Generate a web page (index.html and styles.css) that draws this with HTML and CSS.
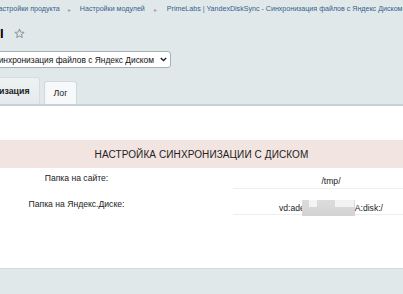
FILE: index.html
```html
<!DOCTYPE html>
<html lang="ru">
<head>
<meta charset="utf-8">
<link rel="stylesheet" href="styles.css">
</head>
<body>
<div class="page">
  <div class="crumbs">
    <span class="crumb">Настройки продукта</span>
    <span class="sep">&#9656;</span>
    <span class="crumb">Настройки модулей</span>
    <span class="sep sep-wide">&#9656;</span>
    <span class="crumb">PrimeLabs | YandexDiskSync - Синхронизация файлов с Яндекс Диском</span>
  </div>
  <div class="title-row">
    <span class="title">I</span>
    <svg class="star" width="11" height="11" viewBox="0 0 24 24"><path d="M12 2.5l2.9 6.1 6.6.8-4.9 4.6 1.3 6.6L12 17.3l-5.9 3.3 1.3-6.6-4.9-4.6 6.6-.8z" fill="none" stroke="#8d9aa3" stroke-width="2.2" stroke-linejoin="round"/></svg>
  </div>
  <div class="select-row">
    <div class="select">
      <span class="select-text">Синхронизация файлов с Яндекс Диском</span>
      <svg class="chev" width="7" height="5" viewBox="0 0 7 5"><path d="M0.8 1l2.7 2.6L6.2 1" fill="none" stroke="#222" stroke-width="1.4"/></svg>
    </div>
  </div>
  <div class="tabs">
    <div class="tab tab-active">Синхронизация</div>
    <div class="tab tab-log">Лог</div>
  </div>
</div>
<div class="panel">
  <div class="heading">НАСТРОЙКА СИНХРОНИЗАЦИИ С ДИСКОМ</div>
  <div class="row row-1">
    <div class="label">Папка на сайте:</div>
    <div class="value">/tmp/</div>
  </div>
  <div class="row row-2">
    <div class="label">Папка на Яндекс.Диске:</div>
    <div class="value">vd:ade<span class="blur"></span>A:disk:/</div>
  </div>
</div>
</body>
</html>
```
FILE: styles.css
```css
html, body {
  margin: 0;
  padding: 0;
}
body {
  width: 403px;
  height: 294px;
  overflow: hidden;
  background: #e1e8ea;
  font-family: "Liberation Sans", Arial, sans-serif;
  color: #222;
}
.page {
  margin-left: -60px;
}
.crumbs {
  display: flex;
  align-items: center;
  height: 18px;
  padding-left: 53.5px;
  white-space: nowrap;
  font-size: 7.1px;
  color: #355f8c;
}
.crumb {
  flex: none;
}
.sep {
  flex: none;
  width: 20px;
  display: flex;
  justify-content: center;
  color: #9aa6ae;
  font-size: 6px;
}
.sep-wide {
  width: 22px;
}
.title-row {
  display: flex;
  align-items: center;
  height: 30px;
  padding-left: 60px;
}
.title {
  font-size: 13px;
  font-weight: bold;
  color: #000;
  line-height: 1;
}
.star {
  margin-left: 10px;
}
.select-row {
  padding-top: 3px;
  height: 26px;
}
.select {
  display: flex;
  align-items: center;
  justify-content: flex-end;
  width: 200px;
  height: 15px;
  margin-left: 29px;
  background: #fff;
  border: 1px solid #a5b1b6;
  border-radius: 3px;
  font-size: 8.4px;
  color: #111;
  white-space: nowrap;
  overflow: hidden;
}
.select-text {
  margin-right: 6px;
}
.chev {
  margin-right: 3px;
}
.tabs {
  display: flex;
  align-items: flex-end;
  height: 27px;
  border-bottom: 2px solid #c8d2d6;
}
.tab {
  font-size: 8.8px;
  color: #222;
  border: 1px solid #cfd8dc;
  border-bottom: none;
  border-radius: 3px 3px 0 0;
  display: flex;
  align-items: center;
}
.tab-active {
  height: 26px;
  font-weight: bold;
  background: linear-gradient(#eef2f3, #e4eaec);
  padding: 0 9px 0 20px;
  border-color: #d5dde0;
}
.tab-log {
  height: 22px;
  margin-left: 4px;
  background: #f6f8f9;
  padding: 0 9px;
}
.panel {
  background: #fff;
  height: 163px;
  padding-top: 34px;
  box-sizing: border-box;
  border-bottom: 1px solid #d4dcdf;
}
.heading {
  height: 28px;
  background: #f2e4e0;
  display: flex;
  align-items: center;
  justify-content: center;
  font-size: 10px;
  color: #222;
  letter-spacing: 0.1px;
}
.row {
  display: grid;
  grid-template-columns: 153px 1fr;
  align-items: start;
  font-size: 8.6px;
  color: #222;
}
.label {
  text-align: center;
}
.value {
  margin-left: 80px;
  border-bottom: 1px solid #eceff1;
  display: flex;
  justify-content: center;
  align-items: center;
  padding-left: 26px;
  box-sizing: border-box;
}
.row-1 .label {
  padding-top: 5px;
}
.row-1 .value {
  height: 21px;
  padding-top: 6px;
}
.row-2 .label {
  padding-top: 10px;
}
.row-2 .value {
  height: 26px;
  padding-top: 13px;
}
.blur {
  display: inline-block;
  width: 53px;
  height: 16px;
  margin-left: -3px;
  background:
    linear-gradient(90deg, transparent 0, transparent 7px, #f4f4f4 7px, #f4f4f4 15px, transparent 15px, transparent 33px, #f2f2f2 33px, #f2f2f2 52px, transparent 52px) top / 100% 7px no-repeat,
    linear-gradient(#dcdcdc, #d3d3d3);
}
```
